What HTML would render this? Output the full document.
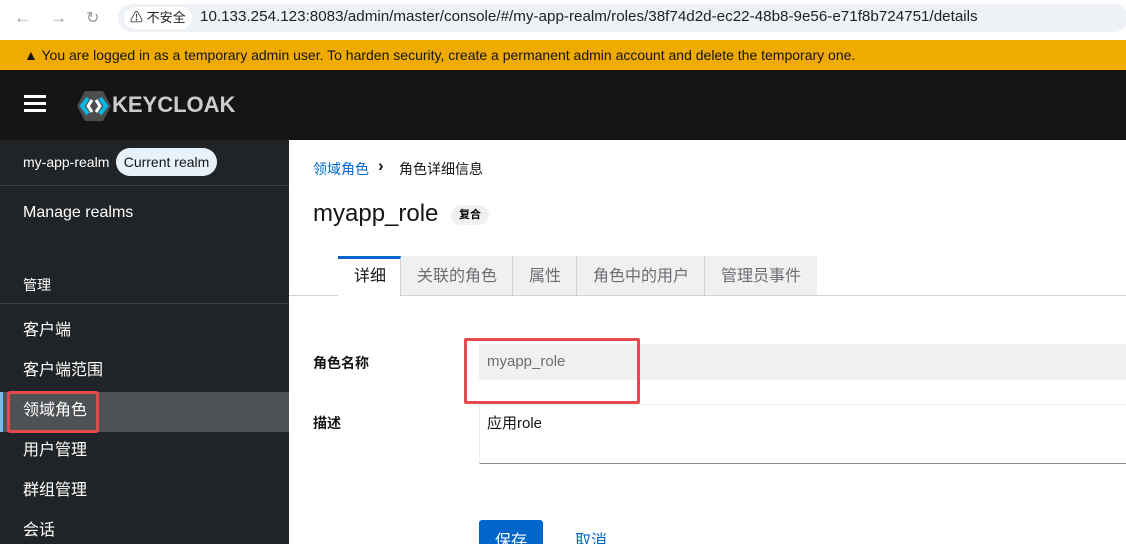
<!DOCTYPE html>
<html><head><meta charset="utf-8"><style>
*{margin:0;padding:0;box-sizing:border-box}
html,body{width:1126px;height:544px;overflow:hidden}
body{position:relative;font-family:"Liberation Sans","Noto Sans CJK SC",sans-serif;background:#fff}
.a{position:absolute;white-space:nowrap}
</style></head><body>
<div class="a" style="left:0;top:0;width:1126px;height:40px;background:#fff"></div>
<div class="a" style="left:14px;top:8px;font-size:17px;color:#999">←</div>
<div class="a" style="left:50px;top:8px;font-size:17px;color:#999">→</div>
<div class="a" style="left:86px;top:8px;font-size:16px;color:#999">↻</div>
<div class="a" style="left:118px;top:4px;width:1010px;height:28px;border-radius:14px;background:#eef1f6"></div>
<div class="a" style="left:124px;top:7px;width:68px;height:22px;border-radius:11px;background:#fff;font-size:13px;line-height:22px;padding-left:6px;color:#222">⚠ 不安全</div>
<div class="a" style="left:200px;top:8px;font-size:15.2px;color:#222">10.133.254.123:8083/admin/master/console/#/my-app-realm/roles/38f74d2d-ec22-48b8-9e56-e71f8b724751/details</div>
<div class="a" style="left:0;top:40px;width:1126px;height:30px;background:#f0ab00"></div>
<div class="a" style="left:24px;top:47px;font-size:14px;color:#151515">▲ You are logged in as a temporary admin user. To harden security, create a permanent admin account and delete the temporary one.</div>
<div class="a" style="left:0;top:70px;width:1126px;height:70px;background:#151515"></div>
<div class="a" style="left:24px;top:95px;width:22px;height:3px;background:#fff;box-shadow:0 7px 0 #fff,0 14px 0 #fff"></div>
<svg class="a" style="left:76px;top:90px" width="36" height="32" viewBox="0 0 36 32"><polygon points="9,1 27,1 35,16 27,31 9,31 1,16" fill="#4d4d4d"/><path d="M12 8 L6 16 L12 24 M24 8 L30 16 L24 24" stroke="#00b9e4" stroke-width="4" fill="none"/><path d="M16 10 L12 16 L16 22 M20 10 L24 16 L20 22" stroke="#fff" stroke-width="3" fill="none"/></svg>
<div class="a" style="left:112px;top:92px;font-size:22px;font-weight:bold;color:#ccc">KEYCLOAK</div>
<div class="a" style="left:0;top:140px;width:289px;height:404px;background:#212427"></div>
<div class="a" style="left:23px;top:154px;font-size:14px;color:#fff">my-app-realm</div>
<div class="a" style="left:116px;top:148px;width:101px;height:28px;border-radius:14px;background:#e7f1fa;font-size:14px;line-height:28px;text-align:center;color:#151515">Current realm</div>
<div class="a" style="left:0;top:185px;width:289px;height:1px;background:#3c3f42"></div>
<div class="a" style="left:23px;top:204px;font-size:16px;color:#fff">Manage realms</div>
<div class="a" style="left:23px;top:275px;font-size:14px;color:#fff">管理</div>
<div class="a" style="left:0;top:303px;width:289px;height:1px;background:#3c3f42"></div>
<div class="a" style="left:0;top:392px;width:289px;height:40px;background:#4f5255"></div>
<div class="a" style="left:0;top:392px;width:3px;height:40px;background:#73bcf7"></div>
<div class="a" style="left:23px;top:311px;font-size:16px;color:#fff;line-height:40px">客户端<br>客户端范围<br>领域角色<br>用户管理<br>群组管理<br>会话</div>
<div class="a" style="left:7px;top:391px;width:92px;height:42px;border:3px solid #e5484d;border-radius:3px"></div>
<div class="a" style="left:313px;top:159px;font-size:14px;color:#0066cc">领域角色</div>
<div class="a" style="left:378px;top:156px;font-size:17px;font-weight:bold;color:#151515">›</div>
<div class="a" style="left:399px;top:159px;font-size:14px;color:#151515">角色详细信息</div>
<div class="a" style="left:313px;top:200px;font-size:24px;color:#151515">myapp_role</div>
<div class="a" style="left:451px;top:205px;width:38px;height:20px;border-radius:10px;background:#f0f0f0;font-size:11px;line-height:20px;text-align:center;font-weight:bold">复合</div>
<div class="a" style="left:289px;top:295px;width:837px;height:1px;background:#d2d2d2"></div>
<div class="a" style="left:401px;top:256px;width:416px;height:39px;background:#f0f0f0"></div>
<div class="a" style="left:338px;top:256px;width:63px;height:40px;background:#fff;border-top:3px solid #06c;border-right:1px solid #d2d2d2"></div>
<div class="a" style="left:354px;top:262px;font-size:16px;color:#151515">详细</div>
<div class="a" style="left:417px;top:262px;font-size:16px;color:#6a6e73">关联的角色</div>
<div class="a" style="left:512px;top:256px;width:1px;height:39px;background:#d2d2d2"></div>
<div class="a" style="left:529px;top:262px;font-size:16px;color:#6a6e73">属性</div>
<div class="a" style="left:576px;top:256px;width:1px;height:39px;background:#d2d2d2"></div>
<div class="a" style="left:593px;top:262px;font-size:16px;color:#6a6e73">角色中的用户</div>
<div class="a" style="left:704px;top:256px;width:1px;height:39px;background:#d2d2d2"></div>
<div class="a" style="left:721px;top:262px;font-size:16px;color:#6a6e73">管理员事件</div>
<div class="a" style="left:313px;top:353px;font-size:14px;font-weight:bold;color:#151515">角色名称</div>
<div class="a" style="left:479px;top:344px;width:647px;height:36px;background:#f0f0f0"></div>
<div class="a" style="left:487px;top:353px;font-size:15px;color:#6a6e73">myapp_role</div>
<div class="a" style="left:464px;top:338px;width:176px;height:66px;border:3px solid #e5484d;border-radius:2px"></div>
<div class="a" style="left:313px;top:413px;font-size:14px;font-weight:bold;color:#151515">描述</div>
<div class="a" style="left:479px;top:404px;width:647px;height:60px;border-top:1px solid #eee;border-left:1px solid #eee;border-bottom:1px solid #8a8d90"></div>
<div class="a" style="left:487px;top:412px;font-size:15px;color:#151515">应用role</div>
<div class="a" style="left:479px;top:520px;width:64px;height:36px;background:#06c;border-radius:3px"></div>
<div class="a" style="left:495px;top:527px;font-size:16px;color:#fff">保存</div>
<div class="a" style="left:575px;top:527px;font-size:16px;color:#06c">取消</div>
</body></html>
